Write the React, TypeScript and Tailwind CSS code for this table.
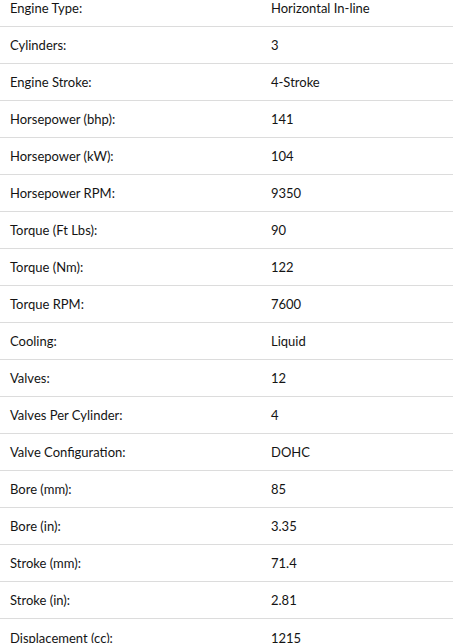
const specs: [string, string][] = [
  ['Engine Type:', 'Horizontal In-line'],
  ['Cylinders:', '3'],
  ['Engine Stroke:', '4-Stroke'],
  ['Horsepower (bhp):', '141'],
  ['Horsepower (kW):', '104'],
  ['Horsepower RPM:', '9350'],
  ['Torque (Ft Lbs):', '90'],
  ['Torque (Nm):', '122'],
  ['Torque RPM:', '7600'],
  ['Cooling:', 'Liquid'],
  ['Valves:', '12'],
  ['Valves Per Cylinder:', '4'],
  ['Valve Configuration:', 'DOHC'],
  ['Bore (mm):', '85'],
  ['Bore (in):', '3.35'],
  ['Stroke (mm):', '71.4'],
  ['Stroke (in):', '2.81'],
  ['Displacement (cc):', '1215'],
];

export default function App() {
  return (
    <div className="min-h-screen bg-white overflow-hidden" style={{ fontFamily: 'Lato, "Liberation Sans", sans-serif' }}>
      <div className="-mt-[10px]">
        {specs.map(([label, value], i) => (
          <div key={label}
            className={`flex items-center h-[37px] pt-[2px] text-[13px] text-[#141414] ${i < specs.length - 1 ? 'border-b border-[#dcdcdc]' : ''}`}>
            <span className="w-[271px] pl-[10px]">{label}</span>
            <span>{value}</span>
          </div>
        ))}
      </div>
    </div>
  );
}
